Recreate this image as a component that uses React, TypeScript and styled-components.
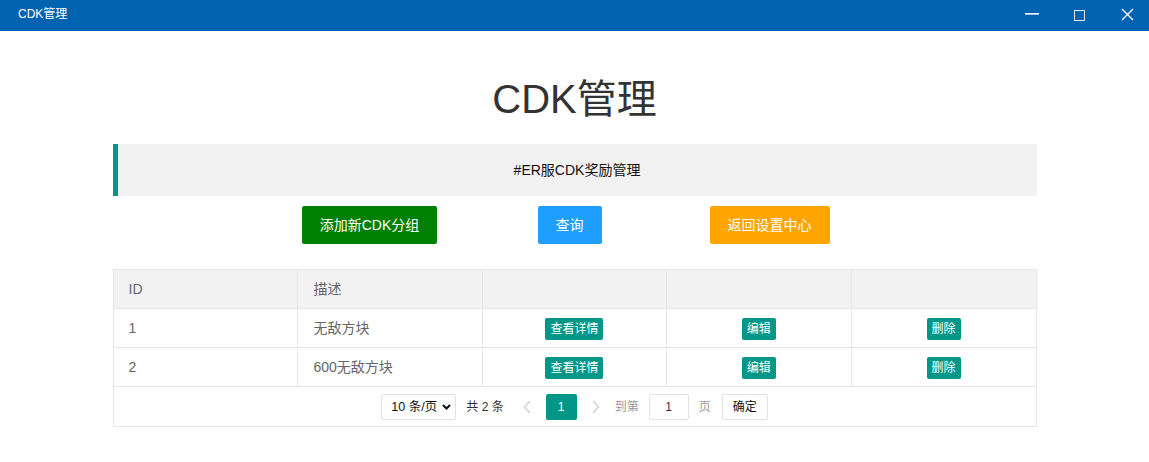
import React, { useState } from 'react';
import styled, { createGlobalStyle } from 'styled-components';

const GlobalStyle = createGlobalStyle`
  html, body {
    margin: 0;
    padding: 0;
    background: #fff;
    overflow: hidden;
  }
  body {
    font-family: "Liberation Sans", Arial, "Noto Sans CJK SC", sans-serif;
    color: #333;
  }
  * {
    box-sizing: border-box;
  }
`;

const TitleBar = styled.div`
  height: 31px;
  background: #0063b1;
  display: flex;
  align-items: stretch;
`;

const WindowTitle = styled.div`
  flex: 1;
  padding-left: 18px;
  font-size: 12px;
  line-height: 29px;
  color: #fff;
`;

const WinButton = styled.button`
  width: 46px;
  height: 31px;
  padding: 0;
  border: none;
  background: transparent;
  display: block;
  cursor: pointer;

  svg {
    display: block;
  }

  &:hover {
    background: rgba(255, 255, 255, 0.12);
  }
`;

const Page = styled.div`
  width: 924px;
  margin: 0 auto;
`;

const Heading = styled.h1`
  margin: 38px 0 15px;
  font-size: 40px;
  line-height: 60px;
  font-weight: 400;
  color: #333;
  text-align: center;
`;

const Quote = styled.blockquote`
  margin: 0 0 10px;
  padding: 15px;
  border-left: 5px solid #009688;
  background: #f2f2f2;
  font-size: 14px;
  line-height: 22px;
  color: #111;
  text-align: center;
`;

const ButtonRow = styled.div`
  display: grid;
  grid-template-columns: repeat(3, 200px);
  justify-content: center;
  padding-right: 10px;
  margin-bottom: 25px;
`;

const Cell = styled.div`
  display: flex;
  justify-content: center;
`;

const Button = styled.button<{ $bg: string }>`
  height: 38px;
  padding: 0 18px;
  border: none;
  border-radius: 2px;
  background: ${(p) => p.$bg};
  color: #fff;
  font-family: inherit;
  font-size: 14px;
  line-height: 38px;
  white-space: nowrap;
  cursor: pointer;

  &:hover {
    opacity: 0.8;
  }
`;

const TableBox = styled.div`
  border: 1px solid #e6e6e6;
`;

const Table = styled.table`
  width: 100%;
  border-collapse: collapse;
  table-layout: fixed;
`;

const Th = styled.th`
  padding: 9px 15px;
  background: #f2f2f2;
  border-right: 1px solid #e6e6e6;
  border-bottom: 1px solid #e6e6e6;
  font-size: 14px;
  line-height: 20px;
  font-weight: 400;
  color: #666;
  text-align: left;

  &:last-child {
    border-right: none;
  }
`;

const Td = styled.td<{ $center?: boolean }>`
  height: 39px;
  padding: ${(p) => (p.$center ? '9px 15px 7px' : '9px 15px')};
  border-right: 1px solid #e6e6e6;
  border-bottom: 1px solid #e6e6e6;
  font-size: 14px;
  line-height: 20px;
  color: #666;
  text-align: ${(p) => (p.$center ? 'center' : 'left')};
  vertical-align: top;

  &:last-child {
    border-right: none;
  }
`;

const SmallButton = styled.button`
  display: inline-block;
  height: 22px;
  padding: 0 5px;
  border: none;
  border-radius: 2px;
  background: #009688;
  color: #fff;
  font-family: inherit;
  font-size: 12px;
  line-height: 22px;
  vertical-align: top;
  cursor: pointer;
`;

const Pager = styled.div`
  height: 39px;
  padding-top: 7px;
  display: flex;
  justify-content: center;
  align-items: flex-start;
  font-size: 12px;
`;

const SelectWrap = styled.div`
  position: relative;
  width: 75px;
  height: 26px;

  svg {
    position: absolute;
    top: 10px;
    left: 61px;
    pointer-events: none;
  }
`;

const Select = styled.select`
  appearance: none;
  width: 100%;
  height: 26px;
  padding: 0 0 0 9px;
  border: 1px solid #e2e2e2;
  border-radius: 2px;
  background: #fff;
  font-family: inherit;
  font-size: 12.5px;
  color: #111;
  outline: none;
`;

const PagerText = styled.span<{ $muted?: boolean }>`
  line-height: 26px;
  color: ${(p) => (p.$muted ? '#999' : '#333')};
`;

const Count = styled(PagerText)`
  margin: 0 4px 0 10px;
`;

const Arrow = styled.span`
  width: 38px;
  height: 26px;
  display: flex;
  align-items: center;
  justify-content: center;
`;

const Current = styled.span`
  width: 31px;
  height: 26px;
  border-radius: 2px;
  background: #009688;
  color: #fff;
  line-height: 26px;
  text-align: center;
`;

const PageInput = styled.input`
  width: 40px;
  height: 26px;
  margin: 0 10px;
  padding: 0 3px;
  border: 1px solid #e2e2e2;
  border-radius: 2px;
  font-family: inherit;
  font-size: 12px;
  color: #333;
  text-align: center;
  outline: none;
`;

const GoButton = styled.button`
  height: 26px;
  margin-left: 11px;
  padding: 0 10px;
  border: 1px solid #e2e2e2;
  border-radius: 2px;
  background: #fff;
  font-family: inherit;
  font-size: 12px;
  line-height: 24px;
  color: #111;
  cursor: pointer;
`;

const rows = [
  { id: 1, desc: '无敌方块' },
  { id: 2, desc: '600无敌方块' },
];

export default function App() {
  const [page, setPage] = useState('1');

  return (
    <>
      <GlobalStyle />
      <TitleBar>
        <WindowTitle>CDK管理</WindowTitle>
        <WinButton aria-label="最小化">
          <svg width="46" height="31" viewBox="0 0 46 31">
            <rect x="14" y="13" width="14" height="1.6" fill="#fff" />
          </svg>
        </WinButton>
        <WinButton aria-label="最大化">
          <svg width="46" height="31" viewBox="0 0 46 31">
            <rect x="17.5" y="10.5" width="10" height="10" fill="none" stroke="#dfe6f0" strokeWidth="1" />
          </svg>
        </WinButton>
        <WinButton aria-label="关闭">
          <svg width="46" height="31" viewBox="0 0 46 31">
            <path d="M19 9 L30 20 M30 9 L19 20" stroke="#fff" strokeWidth="1.3" fill="none" />
          </svg>
        </WinButton>
      </TitleBar>

      <Page>
        <Heading>CDK管理</Heading>
        <Quote>#ER服CDK奖励管理</Quote>

        <ButtonRow>
          <Cell>
            <Button $bg="#008000">添加新CDK分组</Button>
          </Cell>
          <Cell>
            <Button $bg="#1e9fff">查询</Button>
          </Cell>
          <Cell>
            <Button $bg="#ffa500">返回设置中心</Button>
          </Cell>
        </ButtonRow>

        <TableBox>
          <Table>
            <thead>
              <tr>
                <Th>ID</Th>
                <Th>描述</Th>
                <Th />
                <Th />
                <Th />
              </tr>
            </thead>
            <tbody>
              {rows.map((row) => (
                <tr key={row.id}>
                  <Td>{row.id}</Td>
                  <Td>{row.desc}</Td>
                  <Td $center>
                    <SmallButton>查看详情</SmallButton>
                  </Td>
                  <Td $center>
                    <SmallButton>编辑</SmallButton>
                  </Td>
                  <Td $center>
                    <SmallButton>删除</SmallButton>
                  </Td>
                </tr>
              ))}
            </tbody>
          </Table>

          <Pager>
            <SelectWrap>
              <Select defaultValue="10">
                <option value="10">10 条/页</option>
                <option value="20">20 条/页</option>
                <option value="30">30 条/页</option>
              </Select>
              <svg width="9" height="6" viewBox="0 0 9 6">
                <path d="M1 1 L4.5 4.5 L8 1" stroke="#111" strokeWidth="2" fill="none" />
              </svg>
            </SelectWrap>
            <Count>共 2 条</Count>
            <Arrow>
              <svg width="8" height="14" viewBox="0 0 8 14">
                <path d="M7 1 L1.5 7 L7 13" stroke="#d2d2d2" strokeWidth="1.4" fill="none" />
              </svg>
            </Arrow>
            <Current>1</Current>
            <Arrow>
              <svg width="8" height="14" viewBox="0 0 8 14">
                <path d="M1 1 L6.5 7 L1 13" stroke="#d2d2d2" strokeWidth="1.4" fill="none" />
              </svg>
            </Arrow>
            <PagerText $muted>到第</PagerText>
            <PageInput value={page} onChange={(e) => setPage(e.target.value)} />
            <PagerText $muted>页</PagerText>
            <GoButton>确定</GoButton>
          </Pager>
        </TableBox>
      </Page>
    </>
  );
}
